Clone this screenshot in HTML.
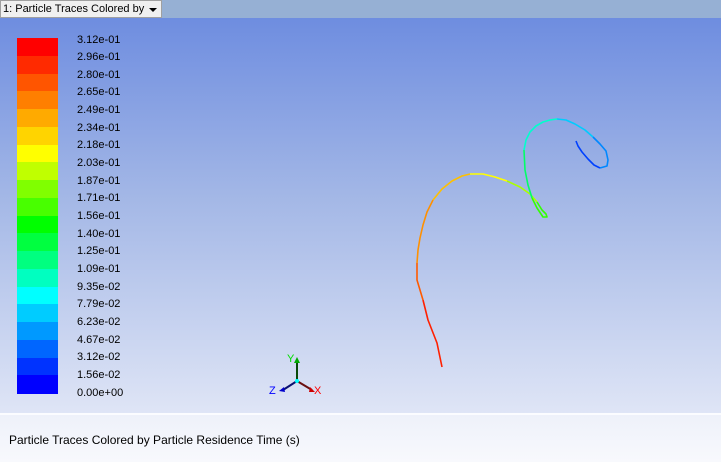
<!DOCTYPE html>
<html><head><meta charset="utf-8"><style>
body{margin:0;width:721px;height:462px;overflow:hidden;font-family:"Liberation Sans",sans-serif;position:relative;background:#f3f5fb}
#top{position:absolute;left:0;top:0;width:721px;height:18px;background:#96b0d4}
#dd{position:absolute;left:0;top:0;width:158px;height:16px;background:#f0f0f0;border:1px solid #a0a0a0;font-size:11px;line-height:16px;padding-left:2px;box-sizing:content-box;color:#000}
#dd span{position:absolute;right:4px;top:7px;width:0;height:0;border-left:4px solid transparent;border-right:4px solid transparent;border-top:4px solid #000}
#view{position:absolute;left:0;top:18px;width:721px;height:396px;background:linear-gradient(#6e8de0,#a3b7e6 45%,#dfe5f6)}
#sep{position:absolute;left:0;top:413px;width:721px;height:2px;background:#fbfcff}
#bot{position:absolute;left:0;top:415px;width:721px;height:47px;background:linear-gradient(#eef1fa,#f8f9fd)}
#cap{position:absolute;left:9px;top:433px;font-size:12px;color:#000}
.sw{position:absolute;left:17px;width:41px}
.lb{position:absolute;left:77px;font-size:11px;color:#000;line-height:12px}
</style></head><body>
<div id="top"><div id="dd">1: Particle Traces Colored by<span></span></div></div>
<div id="view"></div>
<div id="sep"></div><div id="bot"></div>
<div id="cap">Particle Traces Colored by Particle Residence Time (s)</div>
<div id="leg"></div>
<script>
var c=["#ff0000","#ff2a00","#ff5500","#ff7f00","#ffaa00","#ffd400","#ffff00","#c0ff00","#80ff00","#48ff00","#00ff00","#00ff40","#00ff80","#00ffc0","#00ffff","#00ccff","#0099ff","#0066ff","#0033ff","#0000ff"];
var l=["3.12e-01","2.96e-01","2.80e-01","2.65e-01","2.49e-01","2.34e-01","2.18e-01","2.03e-01","1.87e-01","1.71e-01","1.56e-01","1.40e-01","1.25e-01","1.09e-01","9.35e-02","7.79e-02","6.23e-02","4.67e-02","3.12e-02","1.56e-02","0.00e+00"];
var h="";for(var i=0;i<20;i++){var y=38+i*17.75;h+='<div class="sw" style="top:'+y.toFixed(1)+'px;height:18.3px;background:'+c[i]+'"></div>';}
for(var i=0;i<21;i++){h+='<div class="lb" style="top:'+(33.5+i*17.65).toFixed(1)+'px">'+l[i]+'</div>';}
document.getElementById("leg").innerHTML=h;
</script>
<svg width="721" height="462" style="position:absolute;left:0;top:0" fill="none" stroke-width="1.6" stroke-linejoin="round">
<polyline stroke="#ff2000" points="442,367 437,343 428,320 423,300"/>
<polyline stroke="#ff5a00" points="423,300 417,280 417,263"/>
<polyline stroke="#ff9000" points="417,263 418,250 420,238 423,225 427,212 433,200"/>
<polyline stroke="#ffc000" points="433,200 442,189 452,181 462,176 470,174"/>
<polyline stroke="#ffff00" points="470,174 483,174 495,177 507,181"/>
<polyline stroke="#aaff00" points="507,181 520,187 530,194 537,202"/>
<polyline stroke="#33ff00" points="537,202 542,210 546,214 547,217 543,217 537,208 532,198"/>
<polyline stroke="#00ff66" points="532,198 528,185 525,170 524,150"/>
<polyline stroke="#00ffcc" points="524,150 526,140 530,132 536,126 543,122 550,120 557,119"/>
<polyline stroke="#00ccff" points="557,119 566,120 575,124 585,130 593,137"/>
<polyline stroke="#0088ff" points="593,137 600,144 606,151 608,160 607,166 600,168"/>
<polyline stroke="#0040ff" points="600,168 594,165 588,159 582,152 578,146 576,141"/>
<g stroke-width="2">
<line x1="297" y1="381" x2="297" y2="362" stroke="#0a4a0a"/>
<line x1="297" y1="381" x2="283" y2="390" stroke="#0a1070"/>
<line x1="297" y1="381" x2="312" y2="390" stroke="#6a1010"/>
</g>
<path d="M294,363 L297,357 L300,363 Z" fill="#00aa00"/>
<path d="M279,391 L284,387 L285,392 Z" fill="#0000cc"/>
<path d="M315,392 L310,387 L309,392 Z" fill="#cc0000"/>
<circle cx="297" cy="381" r="2" fill="#00ffff"/>
<text x="287" y="362" font-size="11" fill="#00dd00" font-family="Liberation Sans">Y</text>
<text x="269" y="394" font-size="11" fill="#0000ff" font-family="Liberation Sans">Z</text>
<text x="314" y="394" font-size="11" fill="#ff0000" font-family="Liberation Sans">X</text>
</svg>
</body></html>
